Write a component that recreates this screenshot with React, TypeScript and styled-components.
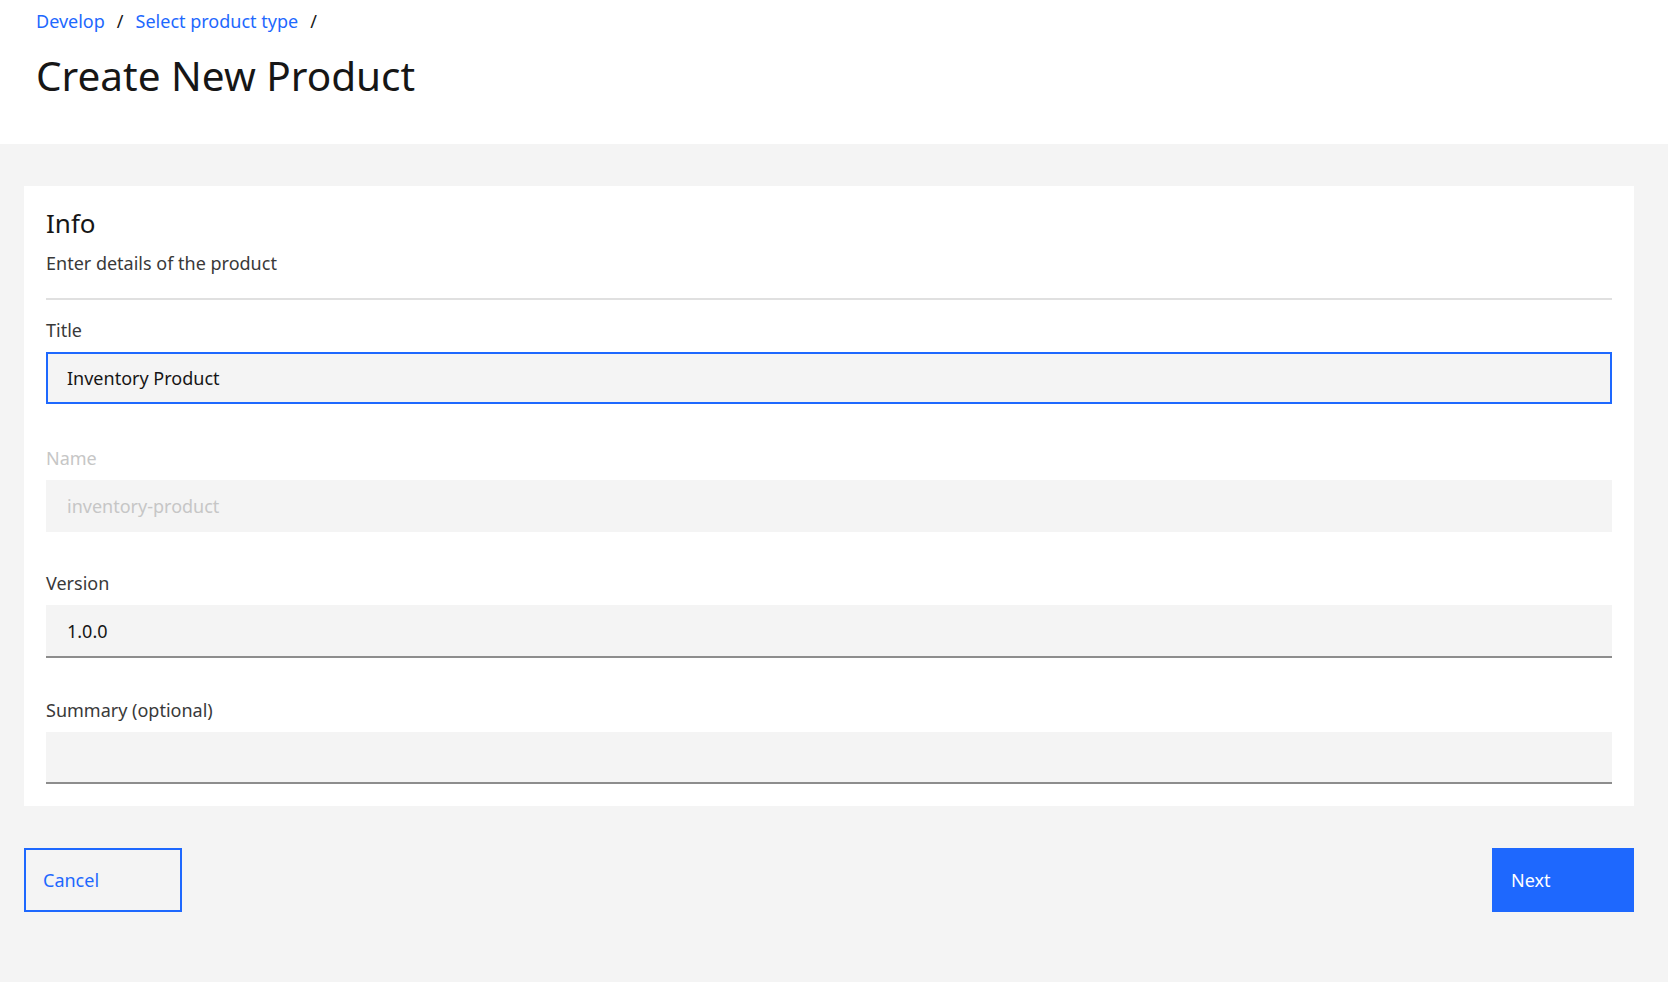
import React from "react";
import styled, { createGlobalStyle } from "styled-components";

const GlobalStyle = createGlobalStyle`
  html, body { margin: 0; padding: 0; background: #f4f4f4; }
  body { font-family: "Noto Sans", "Liberation Sans", sans-serif; color: #161616; }
  * { box-sizing: border-box; }
`;

const Page = styled.div`
  min-height: 982px;
  display: flex;
  flex-direction: column;
  background: #f4f4f4;
`;

const Header = styled.header`
  background: #ffffff;
  height: 144px;
  padding: 8px 0 0 36px;
`;

const Crumbs = styled.nav`
  display: flex;
  align-items: center;
  font-size: 18px;
  line-height: 26px;
`;

const CrumbLink = styled.a`
  color: #1e68fe;
  text-decoration: none;
`;

const Sep = styled.span`
  color: #161616;
  margin: 0 12px;
`;

const Title = styled.h1`
  margin: 16px 0 0;
  font-size: 40.5px;
  font-weight: 400;
  line-height: 52px;
  color: #161616;
`;

const Main = styled.main`
  padding: 42px 34px 0 24px;
  display: flex;
  flex-direction: column;
`;

const Card = styled.section`
  background: #ffffff;
  padding: 20px 22px 22px;
  display: flex;
  flex-direction: column;
`;

const CardTitle = styled.h2`
  margin: 0;
  font-size: 26px;
  font-weight: 400;
  line-height: 34px;
  color: #161616;
`;

const CardSub = styled.p`
  margin: 10px 0 0;
  font-size: 18px;
  line-height: 26px;
  color: #393939;
`;

const Divider = styled.hr`
  border: 0;
  height: 2px;
  background: #e0e0e0;
  margin: 22px 0 0;
`;

const Field = styled.div<{ $gap: number }>`
  display: flex;
  flex-direction: column;
  margin-top: ${(p) => p.$gap}px;
`;

const Label = styled.label<{ $disabled?: boolean }>`
  font-size: 18px;
  line-height: 24px;
  color: ${(p) => (p.$disabled ? "#c6c6c6" : "#393939")};
  margin-bottom: 10px;
`;

const Input = styled.input<{ $variant: "focus" | "disabled" | "normal"; $h: number }>`
  height: ${(p) => p.$h}px;
  width: 100%;
  background: #f4f4f4;
  font-family: inherit;
  font-size: 18px;
  padding: 0 19px;
  outline: none;
  color: ${(p) => (p.$variant === "disabled" ? "#c6c6c6" : "#161616")};
  border: ${(p) => (p.$variant === "focus" ? "2px solid #1e68fe" : "0")};
  border-bottom: ${(p) =>
    p.$variant === "focus" ? "2px solid #1e68fe" : p.$variant === "normal" ? "2px solid #8d8d8d" : "0"};
  ${(p) => (p.$variant === "focus" ? "" : "padding-left: 21px;")}
  &::placeholder { color: #c6c6c6; }
`;

const Actions = styled.div`
  display: flex;
  justify-content: space-between;
  margin-top: 42px;
`;

const Button = styled.button<{ $kind: "primary" | "secondary" }>`
  height: 64px;
  font-family: inherit;
  font-size: 18px;
  text-align: left;
  cursor: pointer;
  padding: 0 17px;
  background: ${(p) => (p.$kind === "primary" ? "#1e68fe" : "transparent")};
  color: ${(p) => (p.$kind === "primary" ? "#ffffff" : "#1e68fe")};
  border: 2px solid #1e68fe;
  width: ${(p) => (p.$kind === "primary" ? "142px" : "158px")};
`;

export default function App() {
  return (
    <Page>
      <GlobalStyle />
      <Header>
        <Crumbs>
          <CrumbLink href="#">Develop</CrumbLink>
          <Sep>/</Sep>
          <CrumbLink href="#">Select product type</CrumbLink>
          <Sep>/</Sep>
        </Crumbs>
        <Title>Create New Product</Title>
      </Header>
      <Main>
        <Card>
          <CardTitle>Info</CardTitle>
          <CardSub>Enter details of the product</CardSub>
          <Divider />
          <Field $gap={18}>
            <Label>Title</Label>
            <Input $variant="focus" $h={52} defaultValue="Inventory Product" />
          </Field>
          <Field $gap={42}>
            <Label $disabled>Name</Label>
            <Input $variant="disabled" $h={52} disabled defaultValue="inventory-product" />
          </Field>
          <Field $gap={39}>
            <Label>Version</Label>
            <Input $variant="normal" $h={53} defaultValue="1.0.0" />
          </Field>
          <Field $gap={40}>
            <Label>Summary (optional)</Label>
            <Input $variant="normal" $h={52} defaultValue="" />
          </Field>
        </Card>
        <Actions>
          <Button $kind="secondary">Cancel</Button>
          <Button $kind="primary">Next</Button>
        </Actions>
      </Main>
    </Page>
  );
}
